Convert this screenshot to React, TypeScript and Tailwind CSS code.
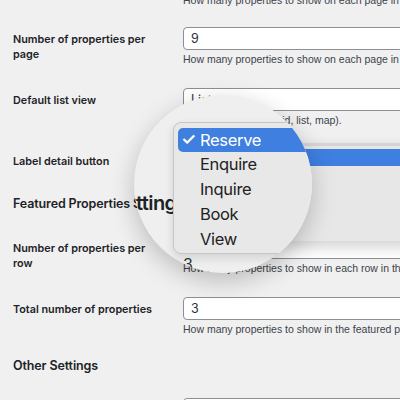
import React from "react";

const label = "text-[10.8px] leading-[15px] font-semibold pt-[5px] pr-2 text-[#1d2327]";
const input =
  "h-[23px] w-[260px] bg-white border border-[#8c8f94] rounded-[4px] px-[7px] text-[12.5px] leading-[21px] text-[#2c3338]";
const help = "text-[10.5px] leading-[14px] text-[#3c434a] whitespace-nowrap font-['Liberation_Sans',sans-serif]";
const heading = "text-[12.5px] leading-[20px] font-semibold tracking-[-0.01em] text-[#1d2327]";

function Row({ title, value, hint, className = "" }: { title: React.ReactNode; value: string; hint: string; className?: string }) {
  return (
    <div className={`grid grid-cols-[170px_1fr] ${className}`}>
      <div className={label}>{title}</div>
      <div>
        <div className={input}>{value}</div>
        <p className={`${help} mt-[2px]`}>{hint}</p>
      </div>
    </div>
  );
}

const items = ["Enquire", "Inquire", "Book", "View"];

export default function App() {
  return (
    <div className="relative h-[400px] w-[400px] overflow-hidden bg-[#f0f0f1] font-['Inter',sans-serif]">
      <div className="pl-[13px]">
        <p className={`${help} -mt-[7px] ml-[170px]`}>How many properties to show on each page in the list view.</p>

        <Row
          className="mt-[20px]"
          title={<>Number of properties per<br />page</>}
          value="9"
          hint="How many properties to show on each page in the list view."
        />
        <Row
          className="mt-[22px]"
          title="Default list view"
          value="List"
          hint="Default page view (grid, list, map)."
        />
        <Row
          className="mt-[22px]"
          title="Label detail button"
          value="Reserve"
          hint="Label shown on the property detail button."
        />

        <h2 className={`mt-[6px] ${heading}`}>Featured Properties Settings</h2>

        <Row
          className="mt-[22px]"
          title={<>Number of properties per<br />row</>}
          value="3"
          hint="How many properties to show in each row in the featured section."
        />
        <Row
          className="mt-[22px]"
          title="Total number of properties"
          value="3"
          hint="How many properties to show in the featured properties section."
        />

        <h2 className={`mt-[20px] ${heading}`}>Other Settings</h2>

        <div className="grid grid-cols-[170px_1fr] mt-[22px]">
          <div className={label}>Default sort order</div>
          <div className={input}></div>
        </div>
      </div>

      {/* open native dropdown, real size */}
      <div className="absolute left-[178px] top-[143px] w-[260px] h-[98px] bg-[#e7e7e8] border-t-[3px] border-[#d4d4d5] pt-[3px] shadow-[0_6px_14px_rgba(0,0,0,0.18)]">
        <div className="h-[17px] bg-[#3f7fe0]" />
      </div>

      {/* magnifier */}
      <div className="absolute left-[134px] top-[95px] w-[178px] h-[178px] rounded-full overflow-hidden bg-[#efeff0] shadow-[0_8px_24px_rgba(0,0,0,0.22)]">
        <span className="absolute left-[2px] top-[97px] text-[20px] leading-[22px] font-semibold tracking-[-0.03em] text-[#1d2327]">tting</span>
        <span className="absolute left-[49px] top-[160px] text-[16px] leading-[18px] text-[#2c3338]">3</span>

        <div className="absolute left-[39px] top-[27px] w-[200px] h-[132px] rounded-[8px] bg-[#e8e8e9] border border-[#c6c6c7] shadow-[0_4px_10px_rgba(0,0,0,0.12)] px-[4px] pt-[5px] text-[16.5px] tracking-[-0.02em] text-[#222]">
          <div className="flex items-center h-[24px] rounded-[5px] bg-[#3f7fe0] text-white">
            <span className="w-[22px] pl-[3px] text-[17px] font-semibold">✓</span>
            <span>Reserve</span>
          </div>
          {items.map((t) => (
            <div key={t} className="flex items-center h-[25px] pl-[22px]">
              {t}
            </div>
          ))}
        </div>
      </div>
    </div>
  );
}
